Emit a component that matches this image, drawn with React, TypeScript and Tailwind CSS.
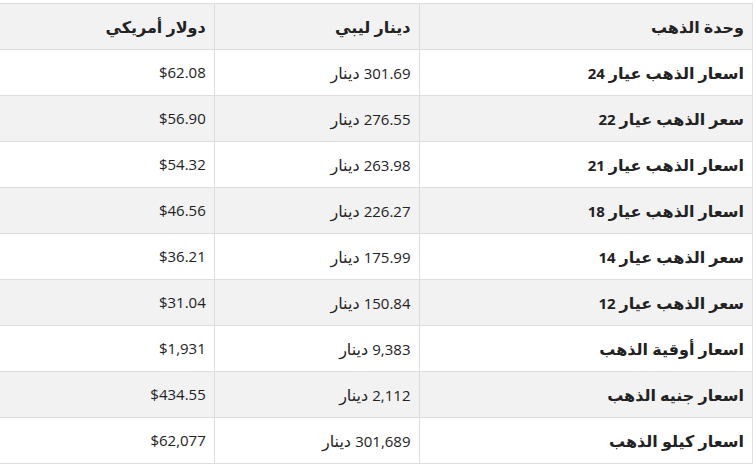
import React from "react";

const rows: [string, string, string, string, string][] = [
  ["اسعار الذهب عيار", "24", "301.69", "دينار", "$62.08"],
  ["سعر الذهب عيار", "22", "276.55", "دينار", "$56.90"],
  ["اسعار الذهب عيار", "21", "263.98", "دينار", "$54.32"],
  ["اسعار الذهب عيار", "18", "226.27", "دينار", "$46.56"],
  ["سعر الذهب عيار", "14", "175.99", "دينار", "$36.21"],
  ["سعر الذهب عيار", "12", "150.84", "دينار", "$31.04"],
  ["اسعار أوقية الذهب", "", "9,383", "دينار", "$1,931"],
  ["اسعار جنيه الذهب", "", "2,112", "دينار", "$434.55"],
  ["اسعار كيلو الذهب", "", "301,689", "دينار", "$62,077"],
];

export default function App() {
  return (
    <div
      className="w-[755px] h-[474px] bg-white pt-[3px] text-[#222]"
      style={{ fontFamily: '"Open Sans", "DejaVu Sans", sans-serif' }}
    >
      <table dir="rtl" className="w-[754px] border-collapse text-[16px] ml-[-1px]">
        <colgroup>
          <col className="w-[334px]" />
          <col className="w-[205px]" />
          <col className="w-[215px]" />
        </colgroup>
        <thead>
          <tr className="h-[46px] bg-[#f2f2f2]">
            {["وحدة الذهب", "دينار ليبي", "دولار أمريكي"].map((h) => (
              <th key={h} className="border border-[#dddddd] px-2 text-right font-bold">
                {h}
              </th>
            ))}
          </tr>
        </thead>
        <tbody>
          {rows.map((r, i) => (
            <tr key={i} className={`h-[46px] ${i % 2 === 1 ? "bg-[#f2f2f2]" : "bg-white"}`}>
              <td className="border border-[#dddddd] px-2 text-right font-bold">
                {r[0]}
                {r[1] && <span className="text-[15px]"> {r[1]}</span>}
              </td>
              <td className="border border-[#dddddd] px-2 text-right">
                <span className="text-[15px]">{r[2]}</span> {r[3]}
              </td>
              <td className="border border-[#dddddd] px-2 text-right text-[15px]">{r[4]}</td>
            </tr>
          ))}
        </tbody>
      </table>
    </div>
  );
}
